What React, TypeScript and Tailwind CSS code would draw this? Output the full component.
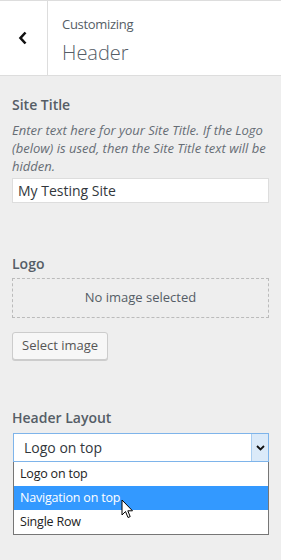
import React from 'react';

const font = { fontFamily: '"Open Sans", "Noto Sans", sans-serif' };

const App = () => {
  return (
    <div className="min-h-screen w-[281px] bg-[#eeeeee] text-[#555d66]" style={font}>
      {/* Header */}
      <div className="flex h-[76px] border-t border-b border-[#dddddd] bg-white">
        <div className="flex w-[48px] items-center justify-center border-r border-[#dddddd]">
          <svg width="10" height="14" viewBox="0 0 10 14" className="ml-[-2px]">
            <path d="M7.5 1.5 L2.5 7 L7.5 12.5" fill="none" stroke="#111" strokeWidth="2.6" />
          </svg>
        </div>
        <div className="flex flex-col pl-[14px] pt-[14px]">
          <span className="text-[13px] leading-[18px] tracking-[-0.3px] text-[#555d66]">Customizing</span>
          <span className="mt-[7px] text-[20px] font-light leading-[26px] text-[#555d66]">Header</span>
        </div>
      </div>

      <div className="px-[12px] pt-[19px]">
        {/* Site Title */}
        <div className="text-[14px] font-semibold leading-[20px] text-[#555d66]">Site Title</div>
        <p className="mt-[6px] text-[13px] italic leading-[18px] text-[#666d75]">
          Enter text here for your Site Title. If the Logo (below) is used, then the Site Title text will be hidden.
        </p>
        <div className="mt-[3px] flex h-[25px] items-center border border-[#dddddd] bg-white px-[5px] text-[14px] text-[#32373c]">
          My Testing Site
        </div>

        {/* Logo */}
        <div className="mt-[51px] text-[14px] font-semibold leading-[20px] text-[#555d66]">Logo</div>
        <div className="mt-[4px] flex h-[40px] items-center justify-center border border-dashed border-[#bbbbbb] text-[13px] text-[#555d66]">
          No image selected
        </div>
        <button className="mt-[14px] flex h-[28px] items-center rounded-[3px] border border-[#cccccc] bg-[#f7f7f7] px-[9px] text-[13px] text-[#555555] shadow-[0_1px_0_#cccccc]">
          Select image
        </button>

        {/* Header Layout */}
        <div className="mt-[48px] text-[14px] font-semibold leading-[20px] text-[#555d66]">Header Layout</div>
        <div className="relative mt-[5px] ml-[1px]">
          <div className="flex h-[29px] items-center border border-[#7eb4ea] bg-white pl-[10px] text-[14px] text-[#32373c]">
            Logo on top
            <div className="ml-auto flex h-full w-[17px] items-center justify-center border-l border-[#a9cdf0] bg-[#dbeaf9]">
              <svg width="9" height="6" viewBox="0 0 9 6">
                <path d="M1 1 L4.5 4.5 L8 1" fill="none" stroke="#111" strokeWidth="1.8" />
              </svg>
            </div>
          </div>
          <div className="border border-t-0 border-[#767676] bg-white text-[12.5px] tracking-[-0.2px] text-[#222222]">
            <div className="flex h-[24px] items-center pl-[6px]">Logo on top</div>
            <div className="flex h-[24px] items-center bg-[#3399ff] pl-[6px] text-white">Navigation on top</div>
            <div className="flex h-[24px] items-center pl-[6px]">Single Row</div>
          </div>
          {/* cursor */}
          <svg width="13" height="20" viewBox="0 0 13 20" className="absolute left-[108px] top-[66px]">
            <path d="M1 1 L1 16 L4.5 12.5 L7 18.5 L9.2 17.6 L6.8 11.8 L11.5 11.8 Z" fill="#fff" stroke="#000" strokeWidth="1" strokeLinejoin="round" />
          </svg>
        </div>
      </div>
    </div>
  );
};

export default App;
